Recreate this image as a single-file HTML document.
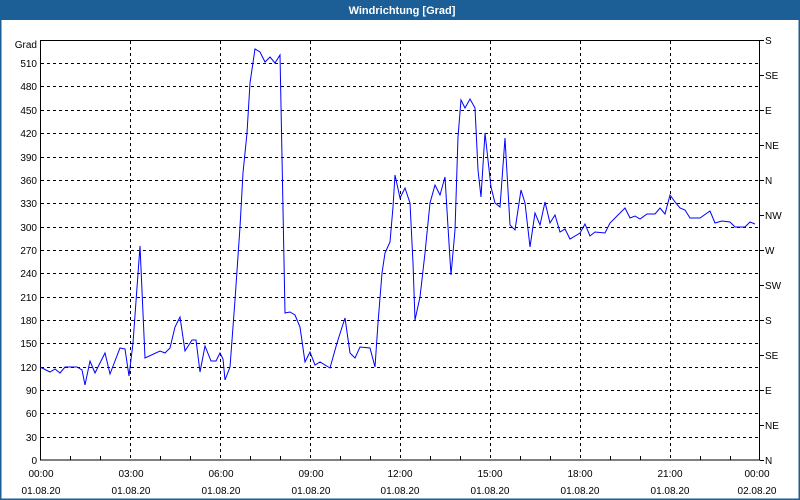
<!DOCTYPE html>
<html><head><style>
html,body{margin:0;padding:0;background:#fff;}
svg{display:block;}
text{font-family:"Liberation Sans",sans-serif;font-size:10px;fill:#000;}
</style></head><body>
<svg width="800" height="500" xmlns="http://www.w3.org/2000/svg">
<rect x="0" y="0" width="800" height="500" fill="#fff"/>
<rect x="0" y="0" width="800" height="20" fill="#1c5f97"/>
<rect x="0.5" y="0.5" width="799" height="499" fill="none" stroke="#1c5f97" stroke-width="2"/>
<text x="402" y="14" text-anchor="middle" style="font-size:11px;font-weight:bold;fill:#fff">Windrichtung [Grad]</text>
<g stroke="#000" stroke-width="1" stroke-dasharray="3,3" fill="none">
<path d="M41 63.5H759M41 86.5H759M41 110.5H759M41 133.5H759M41 157.5H759M41 180.5H759M41 203.5H759M41 227.5H759M41 250.5H759M41 273.5H759M41 297.5H759M41 320.5H759M41 343.5H759M41 367.5H759M41 390.5H759M41 413.5H759M41 437.5H759"/>
<path d="M130.5 41V460M220.5 41V460M310.5 41V460M400.5 41V460M490.5 41V460M580.5 41V460M670.5 41V460"/>
</g>
<rect x="40.5" y="40.5" width="719" height="419.5" fill="none" stroke="#000"/>
<g stroke="#000" fill="none">
<path d="M760 40.5h4M760 75.5h4M760 110.5h4M760 145.5h4M760 180.5h4M760 215.5h4M760 250.5h4M760 285.5h4M760 320.5h4M760 355.5h4M760 390.5h4M760 425.5h4M760 460.5h4"/>
<path d="M70.5 460v-4M100.5 460v-4M160.5 460v-4M190.5 460v-4M250.5 460v-4M280.5 460v-4M340.5 460v-4M370.5 460v-4M430.5 460v-4M460.5 460v-4M520.5 460v-4M550.5 460v-4M610.5 460v-4M640.5 460v-4M700.5 460v-4M730.5 460v-4"/>
</g>
<g text-anchor="end">
<text x="37" y="48">Grad</text>
<text x="37" y="67">510</text><text x="37" y="90">480</text><text x="37" y="114">450</text><text x="37" y="137">420</text><text x="37" y="161">390</text><text x="37" y="184">360</text><text x="37" y="207">330</text><text x="37" y="231">300</text><text x="37" y="254">270</text><text x="37" y="277">240</text><text x="37" y="301">210</text><text x="37" y="324">180</text><text x="37" y="347">150</text><text x="37" y="371">120</text><text x="37" y="394">90</text><text x="37" y="417">60</text><text x="37" y="441">30</text><text x="37" y="464">0</text>
</g>
<g>
<text x="765" y="44">S</text><text x="765" y="79">SE</text><text x="765" y="114">E</text><text x="765" y="149">NE</text><text x="765" y="184">N</text><text x="765" y="219">NW</text><text x="765" y="254">W</text><text x="765" y="289">SW</text><text x="765" y="324">S</text><text x="765" y="359">SE</text><text x="765" y="394">E</text><text x="765" y="429">NE</text><text x="765" y="464">N</text>
</g>
<g text-anchor="middle">
<text x="41" y="477">00:00</text><text x="41" y="494">01.08.20</text>
<text x="131" y="477">03:00</text><text x="131" y="494">01.08.20</text>
<text x="221" y="477">06:00</text><text x="221" y="494">01.08.20</text>
<text x="311" y="477">09:00</text><text x="311" y="494">01.08.20</text>
<text x="400" y="477">12:00</text><text x="400" y="494">01.08.20</text>
<text x="490" y="477">15:00</text><text x="490" y="494">01.08.20</text>
<text x="580" y="477">18:00</text><text x="580" y="494">01.08.20</text>
<text x="670" y="477">21:00</text><text x="670" y="494">01.08.20</text>
<text x="757" y="477">00:00</text><text x="757" y="494">02.08.20</text>
</g>
<polyline fill="none" stroke="#0000ff" stroke-width="1" points="40,367 50,372 55,369 60,373 65,367 77,367 82,370 85,385 90,361 95,373 105,353 110,374 120,348 125,349 129,376 133,343 140,246 145,358 160,351 165,353 170,348 175,327 180,317 185,351 192,340 196,340 200,372 205,346 211,361 216,361 220,353 223,359 225,380 230,367 235,300 240,227 243,173 247,133 250,83 255,49 260,52 265,62 270,57 275,63 280,55 282,157 285,313 290,312 295,315 300,327 305,362 310,352 315,365 320,362 330,368 337,343 345,318 350,353 355,358 360,347 370,348 375,367 378,323 382,273 385,253 390,242 393,207 395,175 400,198 405,188 410,203 413,263 415,320 420,297 425,253 430,203 435,185 440,195 445,177 448,227 451,275 455,230 458,137 461,100 465,108 470,99 475,108 478,170 481,197 485,133 488,160 491,187 495,203 500,207 505,138 507,173 510,225 515,230 521,190 525,203 530,247 535,213 540,225 545,202 550,223 555,215 560,232 565,229 570,239 580,233 585,224 590,236 595,232 605,233 610,223 625,208 630,218 635,216 640,219 647,214 655,214 660,208 665,214 670,195 675,202 680,208 685,210 690,218 700,218 710,211 715,223 722,221 730,222 735,227 745,227 750,222 755,224"/>
</svg>
</body></html>
